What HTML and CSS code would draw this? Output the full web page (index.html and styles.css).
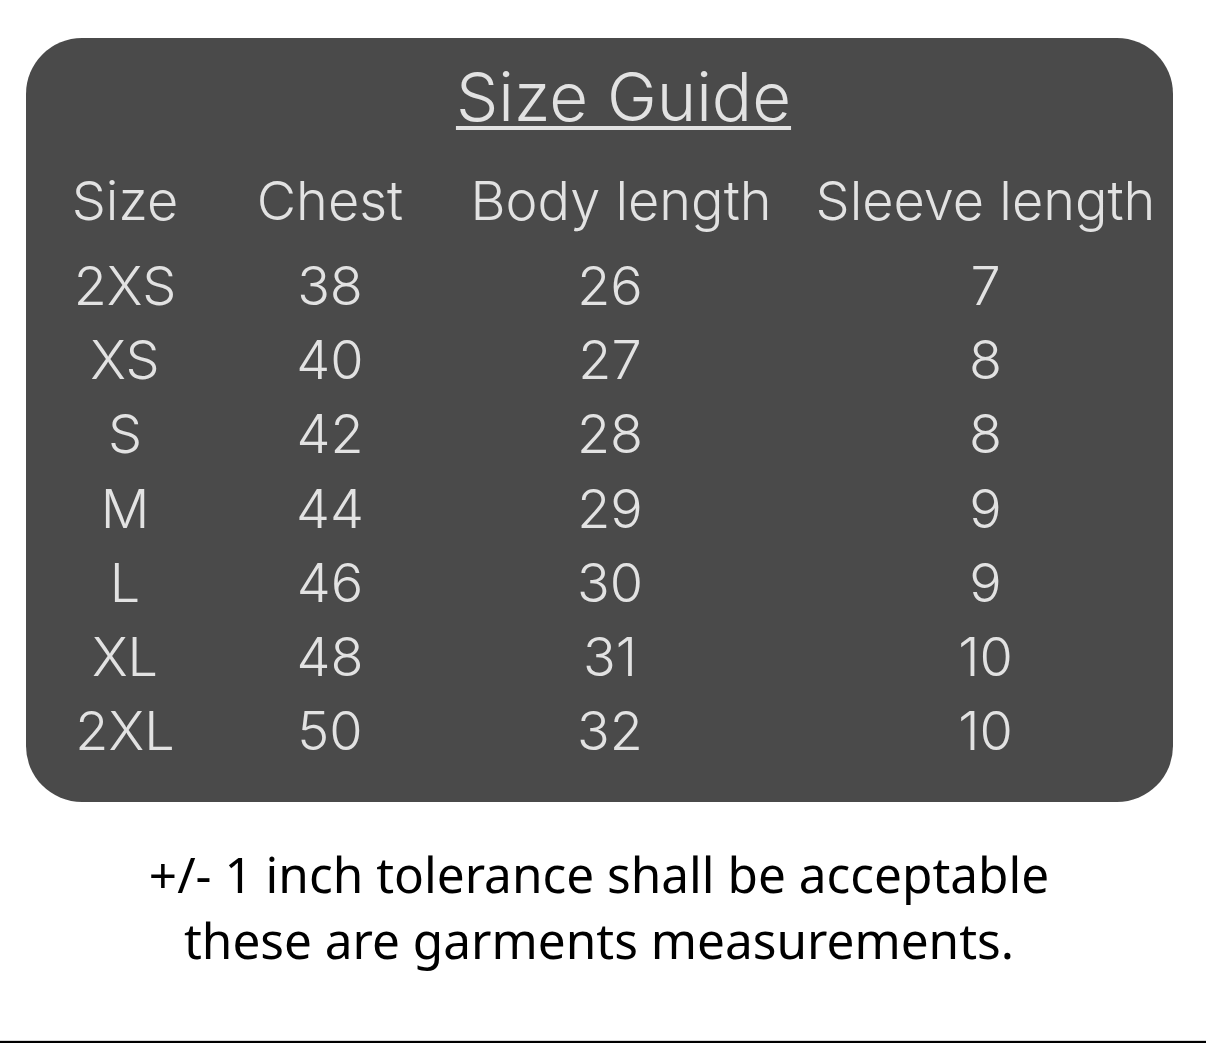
FILE: index.html
```html
<!DOCTYPE html>
<html lang="en">
<head>
<meta charset="utf-8">
<title>Size Guide</title>
<link rel="stylesheet" href="styles.css">
</head>
<body>
<main class="page">
  <section class="card">
    <h1 class="title"><span class="title-text">Size Guide</span></h1>
    <div class="table">
      <div class="row head">
        <span>Size</span><span>Chest</span><span>Body length</span><span>Sleeve length</span>
      </div>
      <div class="row"><span>2XS</span><span>38</span><span>26</span><span>7</span></div>
      <div class="row"><span>XS</span><span>40</span><span>27</span><span>8</span></div>
      <div class="row"><span>S</span><span>42</span><span>28</span><span>8</span></div>
      <div class="row"><span>M</span><span>44</span><span>29</span><span>9</span></div>
      <div class="row"><span>L</span><span>46</span><span>30</span><span>9</span></div>
      <div class="row"><span>XL</span><span>48</span><span>31</span><span>10</span></div>
      <div class="row"><span>2XL</span><span>50</span><span>32</span><span>10</span></div>
    </div>
  </section>
  <p class="note">+/- 1 inch tolerance shall be acceptable<br>these are garments measurements.</p>
  <div class="rule"></div>
</main>
</body>
</html>
```
FILE: styles.css
```css
html, body {
  margin: 0;
  padding: 0;
  background: #ffffff;
}
.page {
  width: 1206px;
  height: 1043px;
  display: flex;
  flex-direction: column;
  overflow: hidden;
}
.card {
  margin: 38px 0 0 26px;
  width: 1147px;
  height: 764px;
  box-sizing: border-box;
  background: #4a4a4a;
  border-radius: 56px;
  color: #e2e2e2;
  font-family: Inter, "Liberation Sans", sans-serif;
  font-weight: 300;
  display: flex;
  flex-direction: column;
  padding-top: 14px;
}
.title {
  margin: 0;
  padding-left: 48px;
  text-align: center;
  font-size: 67px;
  font-weight: 300;
  line-height: 90px;
}
.title-text {
  text-decoration: underline;
  text-decoration-thickness: 4px;
  text-underline-offset: 5px;
  text-decoration-skip-ink: none;
}
.table {
  display: flex;
  flex-direction: column;
  margin-top: 11px;
}
.row {
  display: grid;
  grid-template-columns: 198px 212px 362px 375px;
  font-size: 54px;
  line-height: 74.2px;
  text-align: center;
}
.row.head {
  line-height: 96px;
}
.row.head span:nth-child(3) {
  padding-left: 8px;
}
.row:not(.head) span:nth-child(3) {
  padding-right: 14px;
}
.note {
  margin: 39px 0 0;
  padding-right: 8px;
  text-align: center;
  color: #000;
  font-family: "Noto Sans", "Open Sans", sans-serif;
  font-size: 49.5px;
  line-height: 66px;
}
.rule {
  margin-top: auto;
  height: 2px;
  background: #000;
  border-top: 1px solid #d8d8d8;
}
```
